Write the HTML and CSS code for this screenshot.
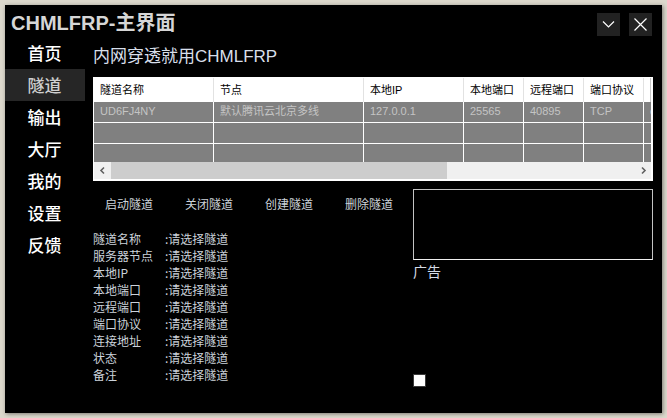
FILE: index.html
```html
<!DOCTYPE html>
<html lang="zh">
<head>
<meta charset="utf-8">
<title>CHMLFRP-主界面</title>
<link rel="stylesheet" href="styles.css">
</head>
<body>
<div class="window">
  <div class="titlebar">
    <div class="title">CHMLFRP-主界面</div>
    <div class="winbtns">
      <div class="winbtn"><svg width="23" height="23" viewBox="0 0 23 23"><polyline points="6,8.5 11.5,14 17,8.5" fill="none" stroke="#fff" stroke-width="1.2"/></svg></div>
      <div class="winbtn"><svg width="23" height="23" viewBox="0 0 23 23"><path d="M5.5 5.5 L17.5 17.5 M17.5 5.5 L5.5 17.5" fill="none" stroke="#fff" stroke-width="1.2"/></svg></div>
    </div>
  </div>
  <div class="main">
    <nav class="sidebar">
      <div class="nav-item">首页</div>
      <div class="nav-item active">隧道</div>
      <div class="nav-item">输出</div>
      <div class="nav-item">大厅</div>
      <div class="nav-item">我的</div>
      <div class="nav-item">设置</div>
      <div class="nav-item">反馈</div>
    </nav>
    <section class="content">
      <h1 class="heading">内网穿透就用CHMLFRP</h1>
      <div class="grid">
        <div class="grid-body">
          <div class="row head">
            <div class="cell c1">隧道名称</div>
            <div class="cell c2">节点</div>
            <div class="cell c3">本地IP</div>
            <div class="cell c4">本地端口</div>
            <div class="cell c5">远程端口</div>
            <div class="cell c6">端口协议</div>
            <div class="cell c7"></div>
          </div>
          <div class="row data">
            <div class="cell c1">UD6FJ4NY</div>
            <div class="cell c2">默认腾讯云北京多线</div>
            <div class="cell c3">127.0.0.1</div>
            <div class="cell c4">25565</div>
            <div class="cell c5">40895</div>
            <div class="cell c6">TCP</div>
            <div class="cell c7">c</div>
          </div>
          <div class="row data">
            <div class="cell c1"></div><div class="cell c2"></div><div class="cell c3"></div><div class="cell c4"></div><div class="cell c5"></div><div class="cell c6"></div><div class="cell c7"></div>
          </div>
          <div class="row data">
            <div class="cell c1"></div><div class="cell c2"></div><div class="cell c3"></div><div class="cell c4"></div><div class="cell c5"></div><div class="cell c6"></div><div class="cell c7"></div>
          </div>
        </div>
        <div class="hscroll">
          <div class="arrow"><svg width="10" height="17" viewBox="0 0 10 17"><polyline points="6,5.5 3,8.5 6,11.5" fill="none" stroke="#606060" stroke-width="1.6"/></svg></div>
          <div class="track"><div class="thumb"></div></div>
          <div class="arrow"><svg width="10" height="17" viewBox="0 0 10 17"><polyline points="4,5.5 7,8.5 4,11.5" fill="none" stroke="#606060" stroke-width="1.6"/></svg></div>
        </div>
      </div>
      <div class="lower">
        <div class="left">
          <div class="actions">
            <div class="action">启动隧道</div>
            <div class="action">关闭隧道</div>
            <div class="action">创建隧道</div>
            <div class="action">删除隧道</div>
          </div>
          <dl class="info">
            <div class="info-row"><dt>隧道名称</dt><dd>:请选择隧道</dd></div>
            <div class="info-row"><dt>服务器节点</dt><dd>:请选择隧道</dd></div>
            <div class="info-row"><dt>本地IP</dt><dd>:请选择隧道</dd></div>
            <div class="info-row"><dt>本地端口</dt><dd>:请选择隧道</dd></div>
            <div class="info-row"><dt>远程端口</dt><dd>:请选择隧道</dd></div>
            <div class="info-row"><dt>端口协议</dt><dd>:请选择隧道</dd></div>
            <div class="info-row"><dt>连接地址</dt><dd>:请选择隧道</dd></div>
            <div class="info-row"><dt>状态</dt><dd>:请选择隧道</dd></div>
            <div class="info-row"><dt>备注</dt><dd>:请选择隧道</dd></div>
          </dl>
        </div>
        <div class="right">
          <div class="adbox"></div>
          <div class="adlabel">广告</div>
          <div class="spacer"></div>
          <div class="check"></div>
        </div>
      </div>
    </section>
  </div>
</div>
</body>
</html>
```

FILE: styles.css
```css
* { box-sizing: border-box; }
html, body { margin: 0; padding: 0; }
body {
  width: 667px;
  height: 418px;
  background: #dcd8cc;
  padding: 5px 5px 5px 5px;
  font-family: "Liberation Sans", "Noto Sans CJK SC", sans-serif;
  overflow: hidden;
}
.window {
  width: 657px;
  height: 408px;
  background: #000;
  box-shadow: 1px 1px 4px rgba(0,0,0,0.45);
  display: flex;
  flex-direction: column;
}
.titlebar {
  height: 32px;
  display: flex;
  align-items: flex-start;
  justify-content: space-between;
  padding: 8px 10px 0 6px;
}
.title {
  font-size: 20px;
  font-weight: bold;
  color: #d6d6d6;
  line-height: 20px;
}
.winbtns { display: flex; gap: 9px; }
.winbtn {
  width: 23px;
  height: 23px;
  background: #222;
}
.winbtn svg { display: block; }
.main { flex: 1; display: flex; min-width: 0; }
.sidebar { width: 80px; flex-shrink: 0; display: flex; flex-direction: column; }
.nav-item {
  height: 32px;
  line-height: 32px;
  font-family: "Noto Sans CJK SC", sans-serif;
  font-size: 17px;
  font-weight: 500;
  color: #fff;
  text-align: center;
  padding-right: 1px;
}
.nav-item.active { background: #262626; color: #cfcfcf; }
.content {
  flex: 1;
  min-width: 0;
  margin-left: 8px;
  margin-right: 9px;
  display: flex;
  flex-direction: column;
}
.heading {
  margin: 0;
  height: 40px;
  line-height: 40px;
  font-size: 17px;
  font-weight: normal;
  color: #d8dfea;
}
.grid {
  height: 104px;
  background: #fff;
  border: 1px solid #fff;
  border-right-width: 2px;
  display: flex;
  flex-direction: column;
}
.grid-body { flex: 1; overflow: hidden; }
.row { display: flex; }
.row.head { height: 24px; background: #fff; }
.row.data { height: 21px; background: #808080; border-bottom: 1px solid #fff; }
.cell {
  font-size: 11px;
  padding-left: 6px;
  white-space: nowrap;
  overflow: hidden;
  flex-shrink: 0;
  border-right: 1px solid #fff;
}
.row.head .cell {
  color: #000;
  line-height: 24px;
  border-right: 1px solid #e2e2e2;
}
.row.data .cell { color: #c4c4c4; line-height: 19px; }
.c1 { width: 120px; }
.c2 { width: 150px; }
.c3 { width: 100px; }
.c4 { width: 60px; }
.c5 { width: 60px; }
.c6 { width: 60px; }
.c7 { flex: 1 1 auto; border-right: none; }
.row.head .c7 { border-right: none; background: #fff; box-shadow: inset -1px 0 0 #c8c8c8; }
.hscroll {
  height: 17px;
  background: #f0f0f0;
  display: flex;
  margin-bottom: 1px;
}
.arrow { width: 17px; flex-shrink: 0; display: flex; justify-content: center; }
.arrow svg { display: block; }
.track { flex: 1; }
.thumb { width: 336px; height: 17px; background: #cdcdcd; }
.lower { display: flex; margin-top: 8px; flex: 1; }
.left { width: 320px; flex-shrink: 0; display: flex; flex-direction: column; }
.actions { display: flex; height: 30px; align-items: center; }
.action {
  width: 80px;
  padding-left: 12px;
  font-family: "Noto Sans CJK SC", sans-serif;
  font-size: 12px;
  line-height: 16px;
  color: #cdd3da;
}
.info { margin: 11px 0 0 0; padding: 0; }
.info-row { display: flex; height: 17px; line-height: 17px; }
.info dt, .info dd {
  margin: 0;
  font-family: "Noto Sans CJK SC", sans-serif;
  font-size: 12px;
  color: #cbd2da;
}
.info dt { width: 72px; }
.right { flex: 1; min-width: 0; display: flex; flex-direction: column; }
.adbox {
  height: 71px;
  border: 1px solid #c4c4c4;
  border-bottom-color: #f0f0f0;
}
.adlabel {
  font-family: "Noto Sans CJK SC", sans-serif;
  font-size: 14px;
  line-height: 22px;
  color: #d4dbe6;
}
.spacer { height: 92px; }
.check {
  width: 13px;
  height: 13px;
  background: #fff;
  border: 1px solid #3a3a3a;
}
```
